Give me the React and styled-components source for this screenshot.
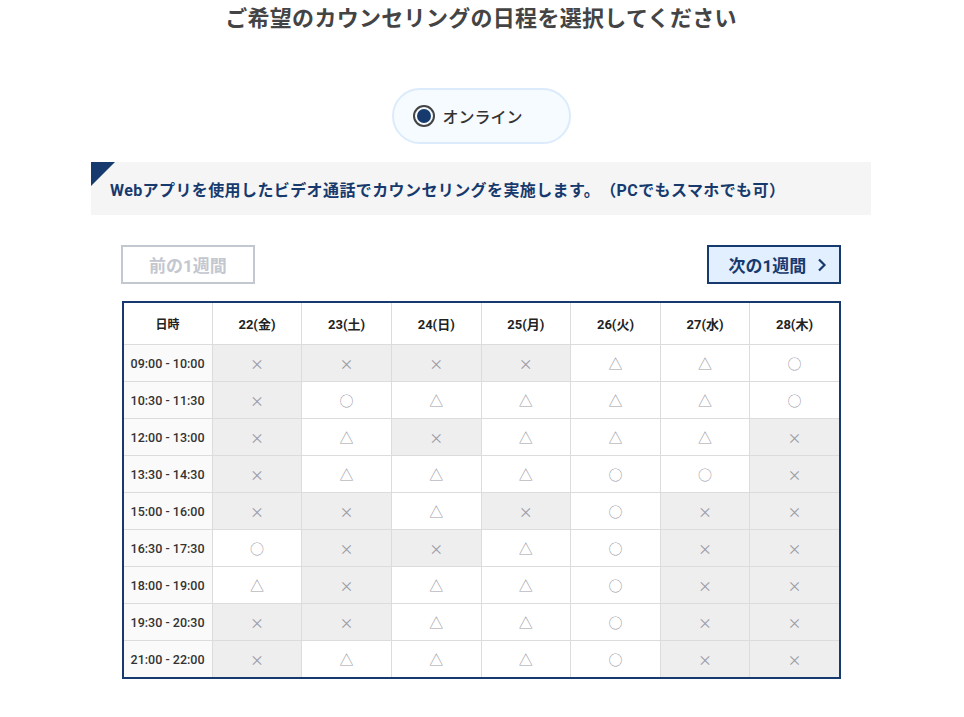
import React from "react";
import styled, { createGlobalStyle } from "styled-components";

const GlobalStyle = createGlobalStyle`
  body {
    margin: 0;
    background: #fff;
    font-family: Roboto, "Noto Sans CJK JP", sans-serif;
    color: #333;
    text-spacing-trim: space-all;
  }
`;

const Page = styled.div`
  width: 780px;
  margin: 0 auto;
  padding-top: 3px;
  display: flex;
  flex-direction: column;
  align-items: center;
  transform: translateX(-1px);
`;

const Title = styled.h1`
  margin: 0;
  font-size: 22px;
  line-height: 31px;
  font-weight: 700;
  color: #444;
  letter-spacing: 0.3px;
`;

const RadioPill = styled.label`
  margin-top: 54px;
  width: 179px;
  height: 56px;
  box-sizing: border-box;
  border: 2px solid #dcebfc;
  background: #f6fbff;
  border-radius: 28px;
  display: flex;
  align-items: center;
  padding-left: 19px;
  gap: 8px;
  font-size: 16px;
  color: #333;
  font-weight: 500;
`;

const RadioDot = styled.span`
  width: 22px;
  height: 22px;
  box-sizing: border-box;
  border: 2px solid #444;
  border-radius: 50%;
  display: flex;
  align-items: center;
  justify-content: center;

  &::after {
    content: "";
    width: 14px;
    height: 14px;
    border-radius: 50%;
    background: #173a6e;
  }
`;

const Notice = styled.div`
  position: relative;
  margin-top: 18px;
  align-self: stretch;
  height: 53px;
  background: #f5f5f5;
  display: flex;
  align-items: center;
  padding: 0 20px 0 19px;
  box-sizing: border-box;
  font-size: 16px;
  font-weight: 700;
  letter-spacing: 0.4px;
  color: #173a6e;

  &::before {
    content: "";
    position: absolute;
    left: 0;
    top: 0;
    border-top: 24px solid #173a6e;
    border-right: 24px solid transparent;
  }
`;

const Nav = styled.div`
  margin-top: 30px;
  align-self: stretch;
  padding: 0 30px;
  display: flex;
  justify-content: space-between;
`;

const WeekButton = styled.button`
  width: 134px;
  height: 39px;
  box-sizing: border-box;
  border: 2px solid ${(p) => (p.$active ? "#173a6e" : "#c3c7cf")};
  background: ${(p) => (p.$active ? "#e2efff" : "#fff")};
  color: ${(p) => (p.$active ? "#173a6e" : "#c3c7cf")};
  font-family: Roboto, "Noto Sans CJK JP", sans-serif;
  font-size: 17px;
  font-weight: 700;
  display: flex;
  align-items: center;
  justify-content: center;
  gap: 11px;
  padding: 0;
  padding-left: ${(p) => (p.$active ? "8px" : "0")};
  cursor: ${(p) => (p.$active ? "pointer" : "default")};
`;

const Table = styled.table`
  margin-top: 17px;
  width: 719px;
  border-collapse: collapse;
  border: 2px solid #173a6e;
  table-layout: fixed;
`;

const HeadCell = styled.th`
  height: 41px;
  border: 1px solid #dcdcdc;
  background: #fff;
  font-size: ${(p) => (p.$small ? "12px" : "13px")};
  font-weight: 700;
  color: #222;
  padding: 0;
`;

const TimeCell = styled.td`
  height: 36px;
  border: 1px solid #dcdcdc;
  background: #fafafa;
  font-size: 12.5px;
  font-weight: 500;
  color: #333;
  text-align: center;
  padding: 0;
  white-space: nowrap;
`;

const SlotCell = styled.td`
  height: 36px;
  border: 1px solid #dcdcdc;
  background: ${(p) => (p.$full ? "#eeeeee" : "#fff")};
  text-align: center;
  padding: 0;
  color: #9a9aa6;
  font-size: 14px;
  font-family: "Noto Sans CJK JP", sans-serif;
`;

const days = ["22(金)", "23(土)", "24(日)", "25(月)", "26(火)", "27(水)", "28(木)"];

const rows = [
  ["09:00 - 10:00", "xxxxtto"],
  ["10:30 - 11:30", "xotttto"],
  ["12:00 - 13:00", "xtxtttx"],
  ["13:30 - 14:30", "xtttoox"],
  ["15:00 - 16:00", "xxtxoxx"],
  ["16:30 - 17:30", "oxxtoxx"],
  ["18:00 - 19:00", "txttoxx"],
  ["19:30 - 20:30", "xxttoxx"],
  ["21:00 - 22:00", "xtttoxx"],
];

const glyph = { x: "×", t: "△", o: "○" };

const Chevron = () => (
  <svg width="10" height="14" viewBox="0 0 10 14" fill="none">
    <path d="M2 1.5 L7.5 7 L2 12.5" stroke="#173a6e" strokeWidth="2.2" />
  </svg>
);

export default function App() {
  return (
    <>
      <GlobalStyle />
      <Page>
        <Title>ご希望のカウンセリングの日程を選択してください</Title>
        <RadioPill>
          <RadioDot />
          オンライン
        </RadioPill>
        <Notice>
          Webアプリを使用したビデオ通話でカウンセリングを実施します。（PCでもスマホでも可）
        </Notice>
        <Nav>
          <WeekButton>前の1週間</WeekButton>
          <WeekButton $active>
            次の1週間
            <Chevron />
          </WeekButton>
        </Nav>
        <Table>
          <thead>
            <tr>
              <HeadCell $small>日時</HeadCell>
              {days.map((d) => (
                <HeadCell key={d}>{d}</HeadCell>
              ))}
            </tr>
          </thead>
          <tbody>
            {rows.map(([time, marks]) => (
              <tr key={time}>
                <TimeCell>{time}</TimeCell>
                {[...marks].map((m, i) => (
                  <SlotCell key={i} $full={m === "x"}>
                    {glyph[m]}
                  </SlotCell>
                ))}
              </tr>
            ))}
          </tbody>
        </Table>
      </Page>
    </>
  );
}
